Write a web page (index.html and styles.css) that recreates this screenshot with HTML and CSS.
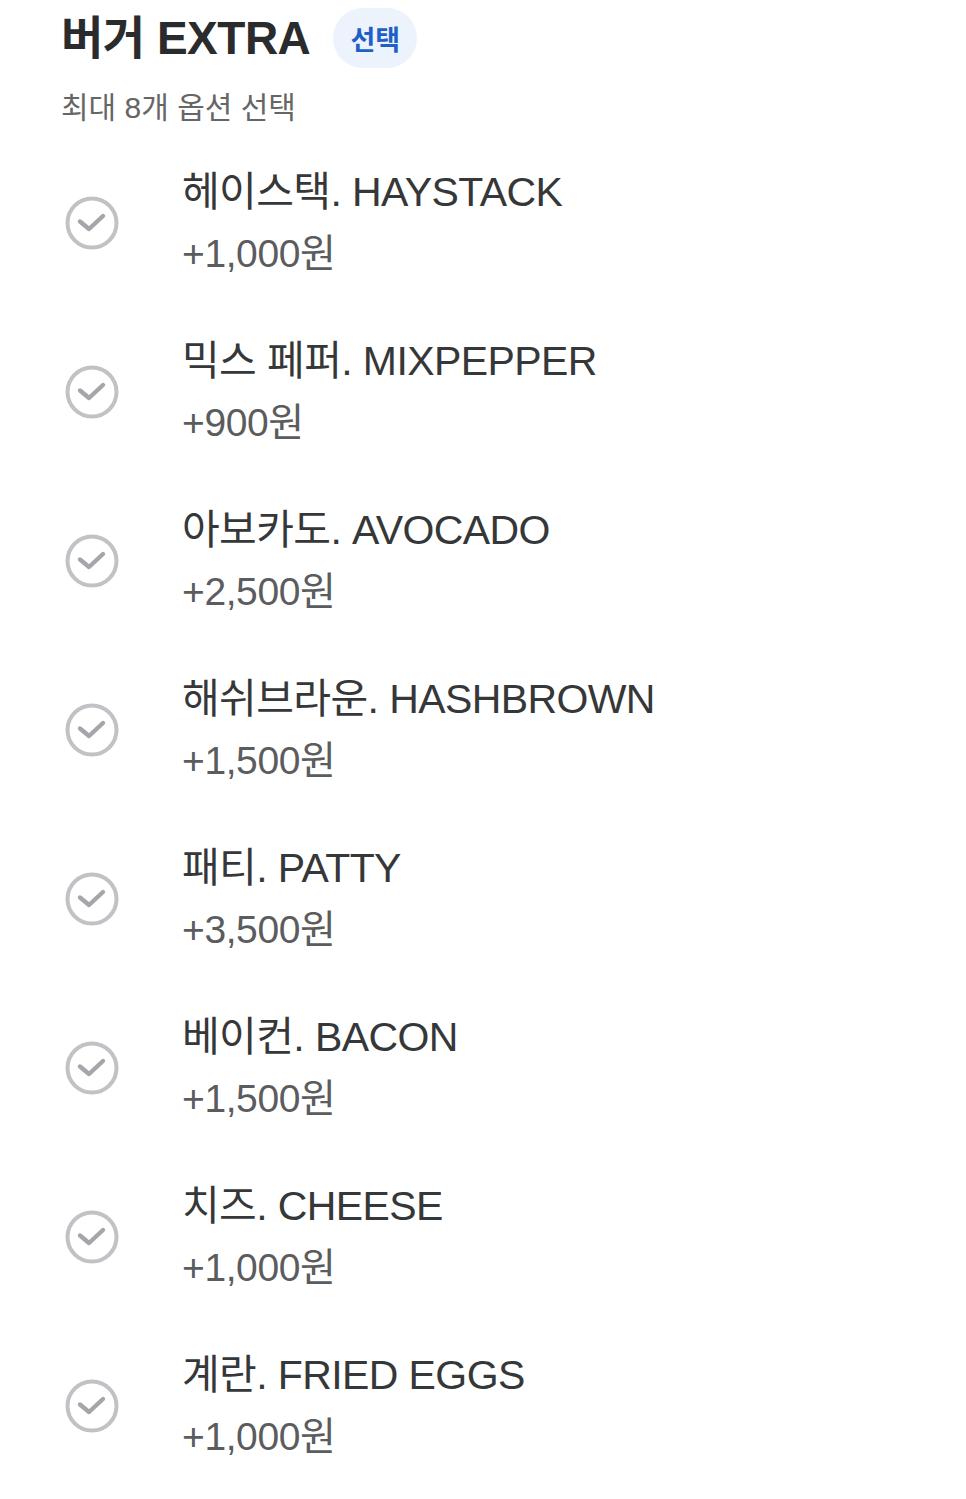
FILE: index.html
```html
<!DOCTYPE html>
<html lang="ko">
<head>
<meta charset="utf-8">
<link rel="stylesheet" href="styles.css">
</head>
<body>
<div class="page">
  <div class="head">
    <h1 class="title">버거 EXTRA</h1>
    <span class="badge">선택</span>
  </div>
  <p class="sub">최대 8개 옵션 선택</p>
  <ul class="list">
    <li class="item"><span class="check"><svg viewBox="0 0 56 56" width="56" height="56"><circle cx="28" cy="28" r="24.5" fill="none" stroke="#c2c2c6" stroke-width="4"/><path d="M16 26.5 L25 34 L39 21" fill="none" stroke="#a6a6aa" stroke-width="4.4" stroke-linecap="round" stroke-linejoin="round"/></svg></span><div class="txt"><div class="name">헤이스택. HAYSTACK</div><div class="price">+1,000원</div></div></li>
    <li class="item"><span class="check"><svg viewBox="0 0 56 56" width="56" height="56"><circle cx="28" cy="28" r="24.5" fill="none" stroke="#c2c2c6" stroke-width="4"/><path d="M16 26.5 L25 34 L39 21" fill="none" stroke="#a6a6aa" stroke-width="4.4" stroke-linecap="round" stroke-linejoin="round"/></svg></span><div class="txt"><div class="name">믹스 페퍼. MIXPEPPER</div><div class="price">+900원</div></div></li>
    <li class="item"><span class="check"><svg viewBox="0 0 56 56" width="56" height="56"><circle cx="28" cy="28" r="24.5" fill="none" stroke="#c2c2c6" stroke-width="4"/><path d="M16 26.5 L25 34 L39 21" fill="none" stroke="#a6a6aa" stroke-width="4.4" stroke-linecap="round" stroke-linejoin="round"/></svg></span><div class="txt"><div class="name">아보카도. AVOCADO</div><div class="price">+2,500원</div></div></li>
    <li class="item"><span class="check"><svg viewBox="0 0 56 56" width="56" height="56"><circle cx="28" cy="28" r="24.5" fill="none" stroke="#c2c2c6" stroke-width="4"/><path d="M16 26.5 L25 34 L39 21" fill="none" stroke="#a6a6aa" stroke-width="4.4" stroke-linecap="round" stroke-linejoin="round"/></svg></span><div class="txt"><div class="name">해쉬브라운. HASHBROWN</div><div class="price">+1,500원</div></div></li>
    <li class="item"><span class="check"><svg viewBox="0 0 56 56" width="56" height="56"><circle cx="28" cy="28" r="24.5" fill="none" stroke="#c2c2c6" stroke-width="4"/><path d="M16 26.5 L25 34 L39 21" fill="none" stroke="#a6a6aa" stroke-width="4.4" stroke-linecap="round" stroke-linejoin="round"/></svg></span><div class="txt"><div class="name">패티. PATTY</div><div class="price">+3,500원</div></div></li>
    <li class="item"><span class="check"><svg viewBox="0 0 56 56" width="56" height="56"><circle cx="28" cy="28" r="24.5" fill="none" stroke="#c2c2c6" stroke-width="4"/><path d="M16 26.5 L25 34 L39 21" fill="none" stroke="#a6a6aa" stroke-width="4.4" stroke-linecap="round" stroke-linejoin="round"/></svg></span><div class="txt"><div class="name">베이컨. BACON</div><div class="price">+1,500원</div></div></li>
    <li class="item"><span class="check"><svg viewBox="0 0 56 56" width="56" height="56"><circle cx="28" cy="28" r="24.5" fill="none" stroke="#c2c2c6" stroke-width="4"/><path d="M16 26.5 L25 34 L39 21" fill="none" stroke="#a6a6aa" stroke-width="4.4" stroke-linecap="round" stroke-linejoin="round"/></svg></span><div class="txt"><div class="name">치즈. CHEESE</div><div class="price">+1,000원</div></div></li>
    <li class="item"><span class="check"><svg viewBox="0 0 56 56" width="56" height="56"><circle cx="28" cy="28" r="24.5" fill="none" stroke="#c2c2c6" stroke-width="4"/><path d="M16 26.5 L25 34 L39 21" fill="none" stroke="#a6a6aa" stroke-width="4.4" stroke-linecap="round" stroke-linejoin="round"/></svg></span><div class="txt"><div class="name">계란. FRIED EGGS</div><div class="price">+1,000원</div></div></li>
  </ul>
</div>
</body>
</html>
```

FILE: styles.css
```css
html, body {
  margin: 0;
  padding: 0;
  background: #ffffff;
}
body {
  font-family: "Liberation Sans", "Noto Sans CJK KR", sans-serif;
  color: #333333;
}
.page {
  padding: 8px 0 0 61px;
}
.head {
  display: flex;
  align-items: center;
  gap: 23px;
  height: 60px;
}
.title {
  margin: 0;
  font-size: 46px;
  font-weight: 700;
  color: #2a2b2d;
  letter-spacing: -0.5px;
  line-height: 60px;
}
.badge {
  display: inline-flex;
  align-items: center;
  justify-content: center;
  width: 84px;
  height: 60px;
  border-radius: 30px;
  background: #edf3fc;
  color: #1f5fc8;
  font-size: 27px;
  font-weight: 700;
}
.sub {
  margin: 20px 0 0;
  font-size: 30px;
  line-height: 40px;
  color: #666666;
}
.list {
  list-style: none;
  margin: 10px 0 0;
  padding: 0;
}
.item {
  display: flex;
  align-items: center;
  height: 169px;
}
.check {
  width: 121px;
  flex: none;
  display: flex;
  align-items: center;
  padding-left: 3px;
  box-sizing: border-box;
}
.check svg {
  display: block;
}
.txt {
  display: flex;
  flex-direction: column;
}
.name {
  font-size: 41px;
  line-height: 62px;
  color: #363738;
  letter-spacing: -0.6px;
}
.price {
  font-size: 39px;
  line-height: 62px;
  color: #5b5c5e;
  letter-spacing: -0.4px;
}
```
